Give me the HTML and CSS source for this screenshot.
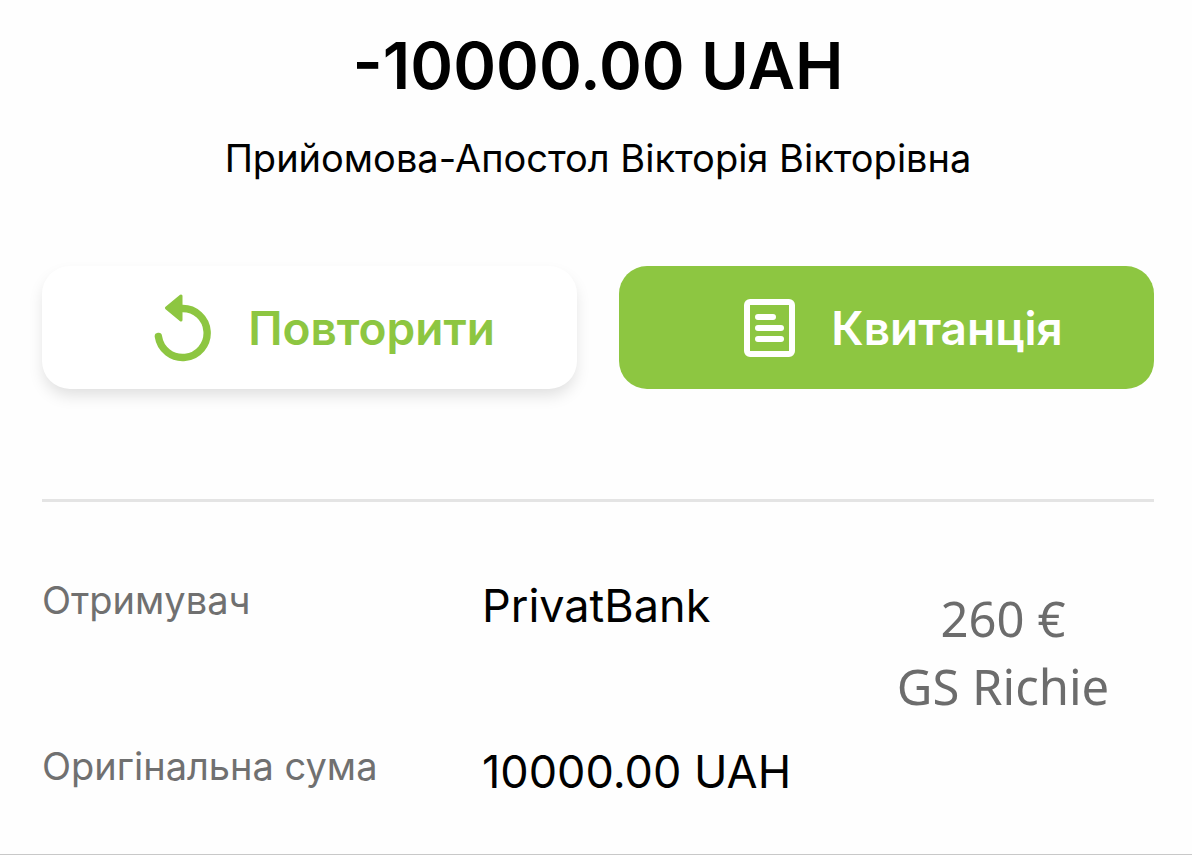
FILE: index.html
```
<!DOCTYPE html>
<html lang="uk">
<head>
    <meta charset="UTF-8" />
    <meta name="viewport" content="width=device-width, initial-scale=1.0"/>
    <title>PrivatBank</title>
    <link rel="stylesheet" href="styles.css">
</head>
<body>

<main class="payment">
    <h1 class="amount">-10000.00 UAH</h1>
    <p class="name">Прийомова-Апостол Вікторія Вікторівна</p>

    <div class="actions">
        <button type="button" class="btn btn-repeat">
            <svg class="icon-repeat" viewBox="0 0 58 68" aria-hidden="true">
                <path d="M28 14.5A24.5 24.5 0 1 1 4.4 42.5" fill="none" stroke="currentColor" stroke-width="7.4" stroke-linecap="round"/>
                <path d="M12.5 14L27 2V26Z" fill="currentColor" stroke="currentColor" stroke-width="3" stroke-linejoin="round"/>
            </svg>
            Повторити
        </button>
        <button type="button" class="btn btn-receipt">
            <svg class="icon-receipt" viewBox="0 0 51 58" aria-hidden="true">
                <rect x="3" y="3" width="45" height="52" rx="3" fill="none" stroke="currentColor" stroke-width="6"/>
                <path d="M14 18H29M14 29H37M14 40H37" fill="none" stroke="currentColor" stroke-width="6" stroke-linecap="round"/>
            </svg>
            Квитанція
        </button>
    </div>

    <section class="details">
        <dl class="rows">
            <dt>Отримувач</dt>
            <dd>PrivatBank</dd>
            <dt>Оригінальна сума</dt>
            <dd>10000.00 UAH</dd>
        </dl>
        <p class="note">260 €<br>GS Richie</p>
    </section>
</main>

</body>
</html>
```

FILE: styles.css
```
* {
    box-sizing: border-box;
}

body {
    margin: 0;
    font-family: Inter, sans-serif;
    background: #fefefe;
    color: #000;
}

.payment {
    padding: 26px 38px 52px 42px;
    border-bottom: 1px solid #c8c8c8;
}

.amount {
    margin: 0;
    font-size: 65px;
    line-height: 80px;
    font-weight: 600;
    text-align: center;
}

.name {
    margin: 28px 0 0;
    font-size: 38px;
    line-height: 48px;
    text-align: center;
}

.actions {
    display: grid;
    grid-template-columns: 1fr 1fr;
    gap: 42px;
    margin-top: 84px;
}

.btn {
    display: flex;
    align-items: center;
    justify-content: center;
    gap: 36px;
    height: 123px;
    border: 0;
    border-radius: 28px;
    font-family: inherit;
    font-size: 46px;
    font-weight: 600;
    cursor: pointer;
}

.btn-repeat {
    padding: 0 0 0 30px;
    background: #fff;
    color: #8dc641;
    box-shadow: 0 8px 16px -2px rgba(0, 0, 0, 0.13);
}

.btn-receipt {
    padding: 0 0 0 34px;
    background: #8dc641;
    color: #fff;
}

.icon-repeat {
    width: 58px;
    height: 68px;
}

.icon-receipt {
    width: 51px;
    height: 58px;
}

.details {
    display: flex;
    margin-top: 110px;
    padding-top: 74px;
    border-top: 3px solid #e4e4e4;
}

.rows {
    flex: 1;
    display: grid;
    grid-template-columns: 440px 1fr;
    row-gap: 106px;
    align-items: start;
    margin: 0;
}

.rows dt {
    color: #707070;
    font-size: 38px;
    line-height: 48px;
}

.rows dd {
    margin: 0;
    font-size: 45px;
    line-height: 60px;
}

.note {
    width: 302px;
    margin: 8px 0 0;
    font-family: "Noto Sans", sans-serif;
    font-size: 49px;
    line-height: 68px;
    color: #6c6c6c;
    text-align: center;
}
```
